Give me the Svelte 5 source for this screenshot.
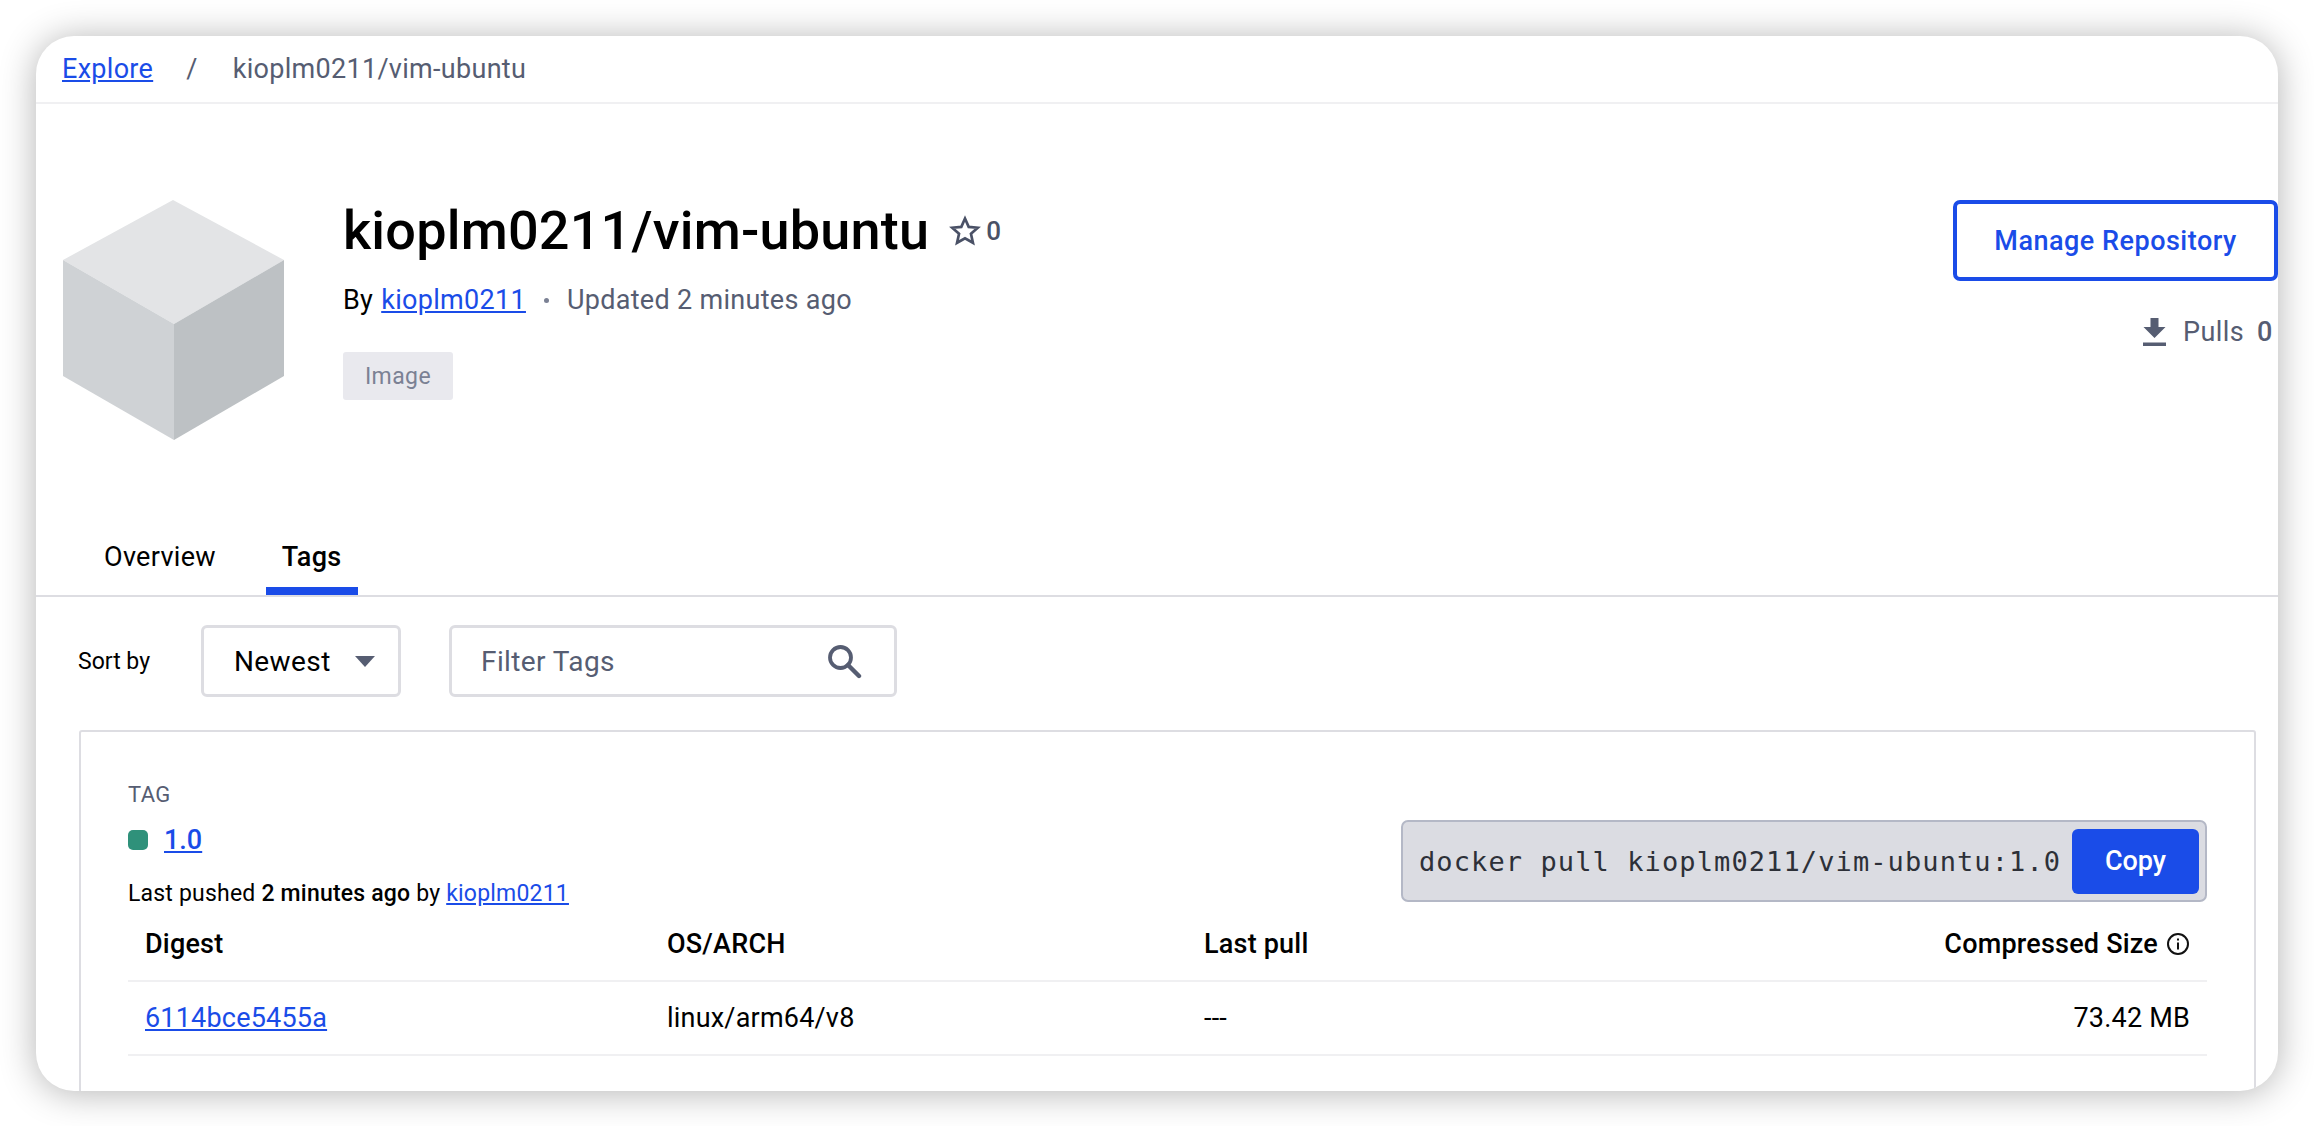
<script>
  const tags = [{ name: '1.0', digest: '6114bce5455a', os: 'linux/arm64/v8', pull: '---', size: '73.42 MB' }];
</script>

<div class="page">
  <main class="window">
    <nav class="crumbs">
      <a href="#explore">Explore</a>
      <span class="sep">/</span>
      <span class="here">kioplm0211/vim-ubuntu</span>
    </nav>

    <header class="hero">
      <svg class="cube" viewBox="0 0 221 240" width="221" height="240" aria-hidden="true">
        <polygon points="110,0 221,60 111,124 0,60" fill="#e3e4e6" />
        <polygon points="0,60 111,124 111,240 0,176" fill="#cfd2d5" />
        <polygon points="221,60 221,176 111,240 111,124" fill="#bdc1c4" />
      </svg>
      <div class="info">
        <div class="title-row">
          <h1>kioplm0211/vim-ubuntu</h1>
          <svg class="star" viewBox="0 0 24 24" width="34" height="34" aria-hidden="true">
            <path d="M12 3.2l2.6 5.9 6.4.6-4.8 4.3 1.4 6.3L12 17.1l-5.6 3.2 1.4-6.3L3 9.7l6.4-.6z" fill="none" stroke="#4a5166" stroke-width="1.9" stroke-linejoin="miter" />
          </svg>
          <span class="stars">0</span>
        </div>
        <p class="meta">By <a href="#user">kioplm0211</a><span class="dot"></span><span class="updated">Updated 2 minutes ago</span></p>
        <span class="chip">Image</span>
      </div>
      <div class="actions">
        <button class="manage">Manage Repository</button>
        <div class="pulls">
          <svg viewBox="0 0 23 28" width="23" height="28" aria-hidden="true">
            <path d="M7.5 0h8v9h7l-11 11-11-11h7zM0 24.500h23V28H0z" fill="#565d72" />
          </svg>
          <span>Pulls</span><b>0</b>
        </div>
      </div>
    </header>

    <div class="tabs">
      <span class="tab">Overview</span>
      <span class="tab active">Tags</span>
    </div>

    <div class="filters">
      <span class="sort">Sort by</span>
      <div class="select">
        <span>Newest</span>
        <i class="caret"></i>
      </div>
      <div class="filter">
        <span>Filter Tags</span>
        <svg viewBox="0 0 36 36" width="36" height="36" aria-hidden="true">
          <circle cx="14.500" cy="14.500" r="10.500" fill="none" stroke="#565d72" stroke-width="3.800" />
          <path d="M22 22l11 11" stroke="#565d72" stroke-width="4.400" stroke-linecap="round" />
        </svg>
      </div>
    </div>

    {#each tags as t}
      <section class="card">
        <div class="tag-head">
          <div class="tag-left">
            <div class="tag-label">TAG</div>
            <div class="tag-name"><i class="status"></i><a href="#tag">{t.name}</a></div>
            <div class="pushed">Last pushed <b>2 minutes ago</b> by <a href="#user">kioplm0211</a></div>
          </div>
          <div class="pull-box">
            <code>docker pull kioplm0211/vim-ubuntu:{t.name}</code>
            <button class="copy">Copy</button>
          </div>
        </div>
        <div class="row head">
          <span>Digest</span>
          <span>OS/ARCH</span>
          <span>Last pull</span>
          <span class="right">Compressed Size
            <svg viewBox="0 0 24 24" width="24" height="24" aria-hidden="true">
              <circle cx="12" cy="12" r="10" fill="none" stroke="#111" stroke-width="2" />
              <path d="M12 10.500v7M12 6.500v2" stroke="#111" stroke-width="2" />
            </svg>
          </span>
        </div>
        <div class="row body">
          <a href="#digest">{t.digest}</a>
          <span>{t.os}</span>
          <span>{t.pull}</span>
          <span class="right">{t.size}</span>
        </div>
      </section>
    {/each}
  </main>
</div>

<style>
  :global(body) { margin: 0; background: #fff; }
  .page { width: 2314px; height: 1126px; padding: 36px; box-sizing: border-box; overflow: hidden; font-family: Roboto, sans-serif; color: #000; }
  .window { width: 2242px; height: 1055px; background: #fff; border-radius: 38px; overflow: hidden; box-shadow: 0 2px 36px rgba(0, 0, 0, .3); position: relative; }
  .page { background: #fff; }
  a { color: #1a4ce8; text-decoration: underline; }
  .crumbs { height: 66px; box-sizing: content-box; border-bottom: 2px solid #f0f0f2; display: flex; align-items: center; padding-left: 26px; font-size: 27px; letter-spacing: .3px; }
  .sep { margin-left: 33px; color: #565d72; }
  .here { margin-left: 35px; color: #565d72; }
  .hero { height: 385px; display: flex; align-items: flex-start; padding: 96px 0 0 27px; box-sizing: border-box; position: relative; }
  .cube { flex: none; }
  .info { margin-left: 59px; flex: 1; padding-top: 0; }
  .title-row { display: flex; align-items: center; height: 62px; margin-top: 0; }
  h1 { margin: 0; font-size: 54px; font-weight: 500; line-height: 62px; letter-spacing: .2px; }
  .star { margin-left: 19px; }
  .stars { margin-left: 4px; font-size: 26px; font-weight: 500; color: #4a5166; }
  .meta { margin: 20px 0 0; font-size: 27px; line-height: 36px; display: flex; align-items: center; letter-spacing: .3px; }
  .meta a { margin-left: 8px; }
  .dot { width: 5px; height: 5px; border-radius: 50%; background: #7b8194; margin: 0 18px; }
  .updated { color: #565d72; }
  .chip { display: inline-flex; align-items: center; justify-content: center; margin-top: 34px; width: 110px; height: 48px; background: #e9e9ee; border-radius: 3px; color: #7b8194; font-size: 23px; letter-spacing: .4px; }
  .actions { position: absolute; right: 0; top: 96px; display: flex; flex-direction: column; align-items: flex-end; }
  .manage { width: 325px; height: 81px; background: #fff; border: 4px solid #1a4ce8; border-radius: 7px; color: #1a4ce8; font: 500 27px Roboto, sans-serif; letter-spacing: .5px; padding: 0; }
  .pulls { display: flex; align-items: center; margin-top: 37px; height: 28px; color: #565d72; font-size: 27px; letter-spacing: .4px; }
  .pulls span { margin-left: 17px; }
  .pulls b { margin-left: 13px; font-weight: 500; width: 21px; overflow: hidden; }
  .tabs { height: 106px; margin-top: 0; border-bottom: 2px solid #dddde2; display: flex; align-items: flex-end; padding-left: 52px; box-sizing: content-box; gap: 0; }
  .tab { height: 60px; padding: 0 16px; font-size: 27px; display: flex; align-items: flex-start; padding-top: 0; box-sizing: border-box; letter-spacing: .3px; line-height: 44px; }
  .tab.active { font-weight: 500; margin-left: 34px; border-bottom: 8px solid #1a4ce8; }
  .filters { display: flex; align-items: center; padding: 28px 0 0 42px; height: 72px; }
  .sort { font-size: 23px; width: 123px; }
  .select { width: 200px; height: 72px; box-sizing: border-box; border: 3px solid #dddde2; border-radius: 6px; display: flex; align-items: center; padding-left: 30px; font-size: 28px; letter-spacing: .4px; }
  .caret { width: 0; height: 0; margin-left: 24px; border-left: 10px solid transparent; border-right: 10px solid transparent; border-top: 11px solid #565d72; }
  .filter { width: 448px; height: 72px; margin-left: 48px; box-sizing: border-box; border: 3px solid #dddde2; border-radius: 6px; display: flex; align-items: center; justify-content: space-between; padding: 0 32px 0 29px; font-size: 28px; color: #565d72; letter-spacing: .4px; }
  .card { margin: 33px 22px 0 43px; border: 2px solid #dddde2; border-radius: 3px; padding: 0 47px; height: 400px; }
  .tag-head { display: flex; justify-content: space-between; }
  .tag-left { padding-top: 49px; }
  .tag-label { font-size: 22px; line-height: 28px; color: #565d72; letter-spacing: .4px; }
  .tag-name { display: flex; align-items: center; margin-top: 16px; height: 30px; font-size: 27px; font-weight: 500; }
  .status { width: 20px; height: 20px; border-radius: 5px; background: #2f917a; margin-right: 16px; }
  .pushed { margin-top: 25px; font-size: 23px; line-height: 28px; letter-spacing: .2px; }
  .pushed b { font-weight: 500; }
  .pull-box { align-self: flex-start; margin-top: 88px; box-sizing: border-box; width: 806px; height: 82px; background: #dbdce2; border: 2px solid #b4b8c6; border-radius: 7px; display: flex; align-items: center; justify-content: space-between; padding: 0 6px 0 16px; }
  code { font-family: "DejaVu Sans Mono", monospace; font-size: 27px; letter-spacing: 1.100px; color: #2d3038; }
  .copy { width: 127px; height: 65px; border: 0; border-radius: 6px; background: #1a4ce8; color: #fff; font: 500 27px Roboto, sans-serif; padding: 0; }
  .row { display: grid; grid-template-columns: 522px 537px 1fr auto; align-items: center; padding: 0 17px; font-size: 27px; border-bottom: 2px solid #f0f0f2; letter-spacing: .2px; }
  .head { height: 72px; font-weight: 500; margin-top: 0; }
  .body { height: 72px; }
  .right { display: flex; align-items: center; gap: 8px; justify-content: flex-end; }
</style>
